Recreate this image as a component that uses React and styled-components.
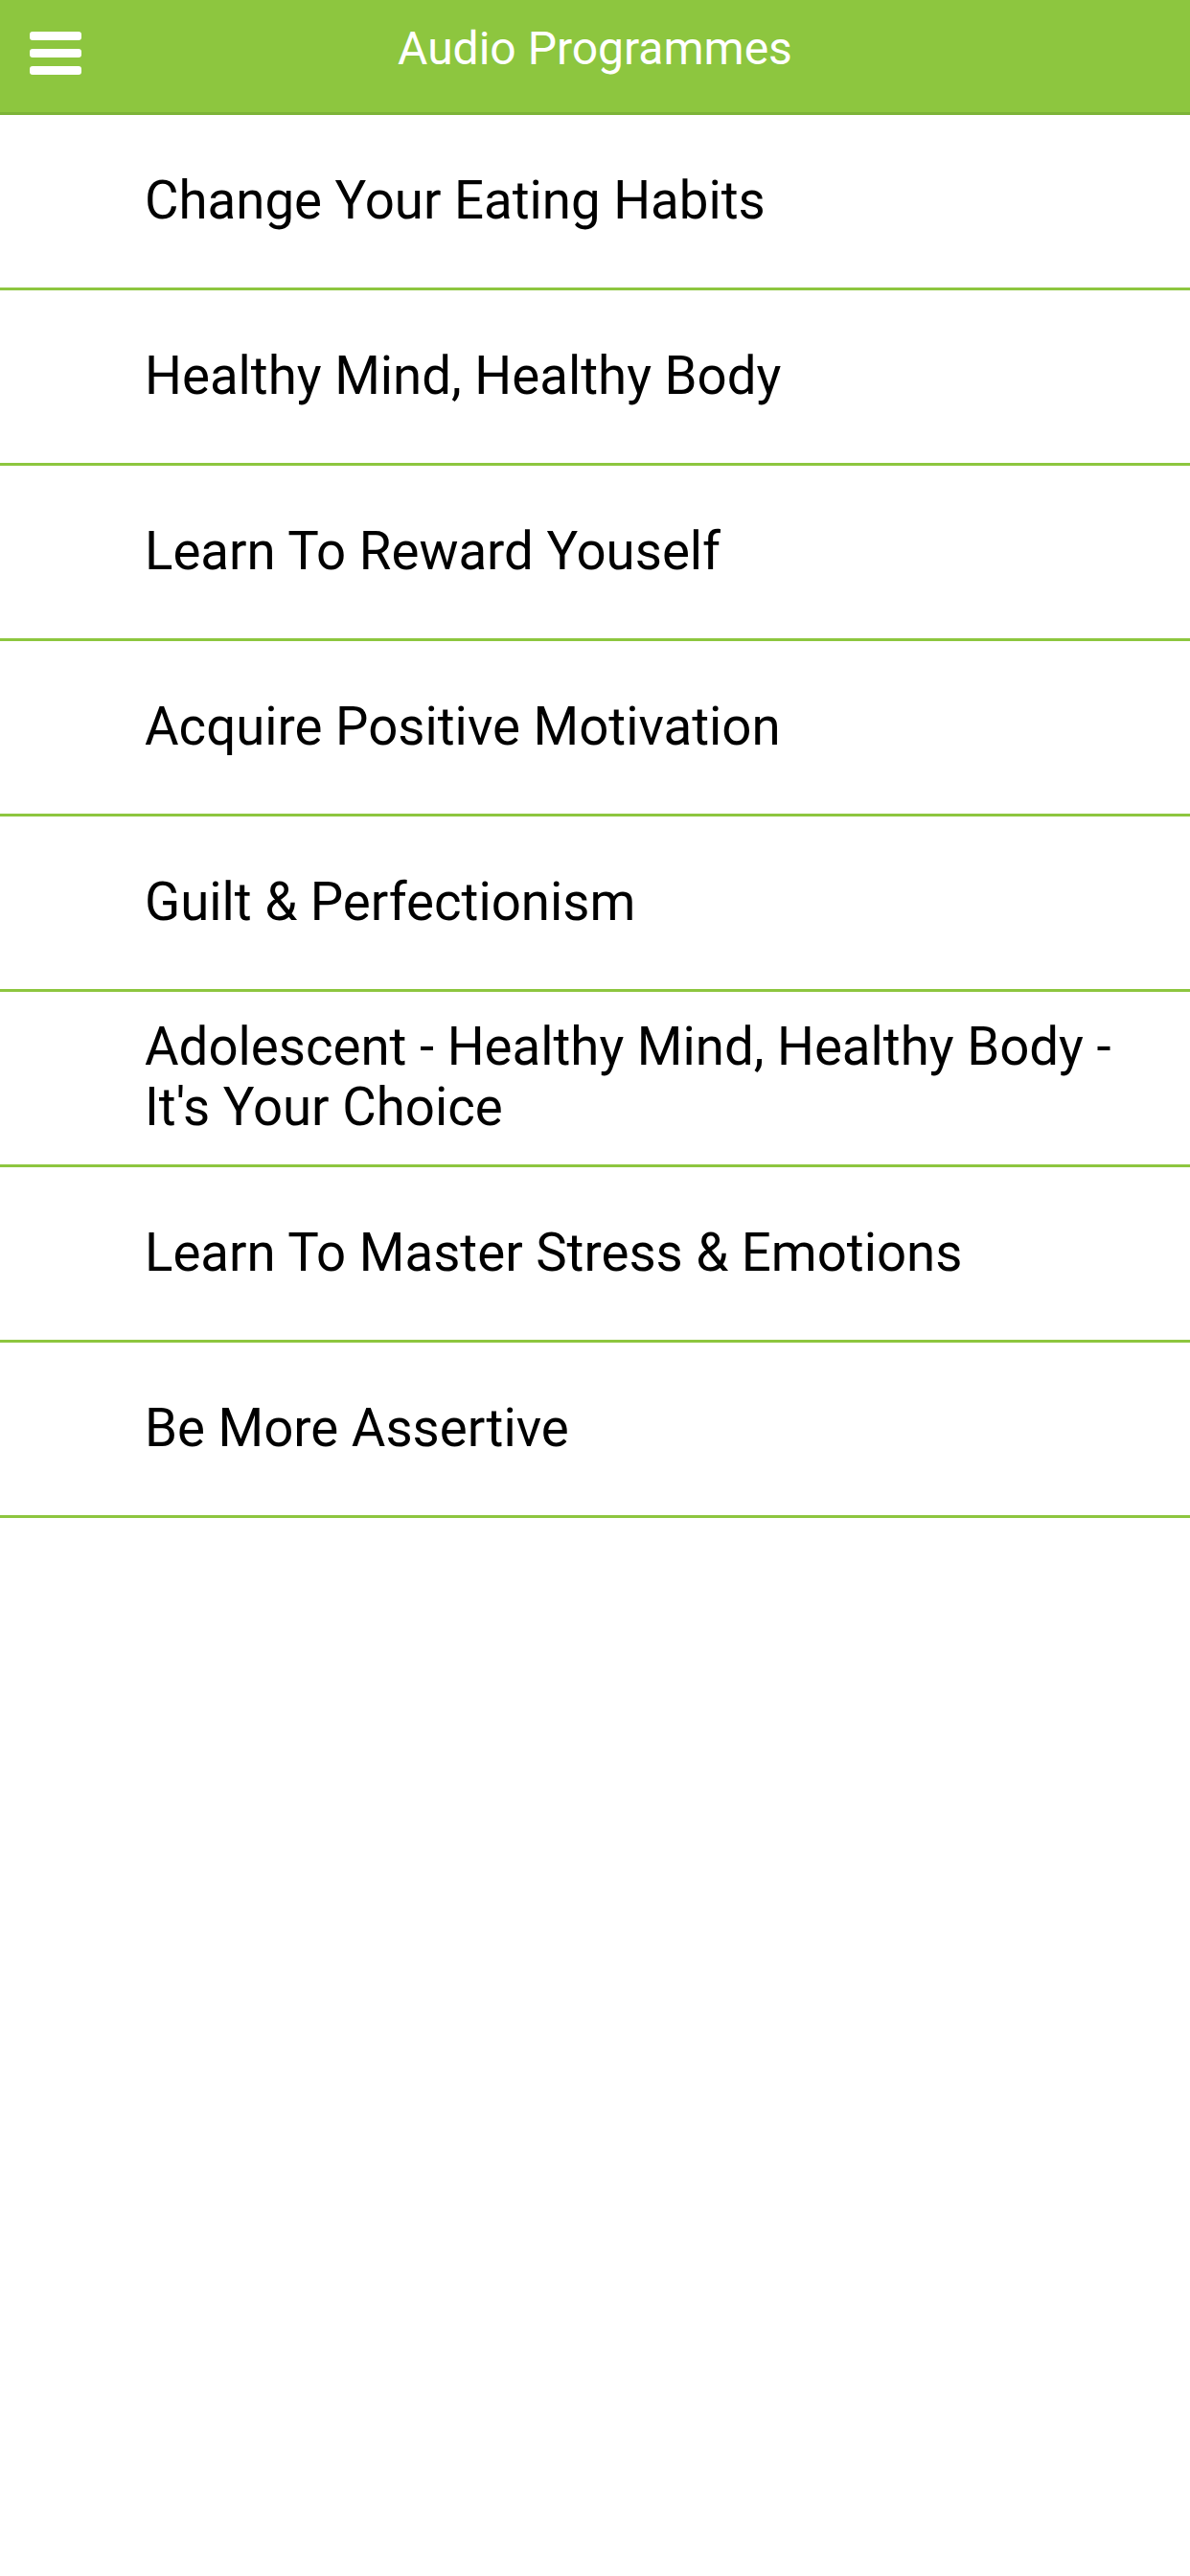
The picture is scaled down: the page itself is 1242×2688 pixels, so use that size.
import React from "react";
import styled, { createGlobalStyle } from "styled-components";

const programmes = [
  "Change Your Eating Habits",
  "Healthy Mind, Healthy Body",
  "Learn To Reward Youself",
  "Acquire Positive Motivation",
  "Guilt & Perfectionism",
  "Adolescent - Healthy Mind, Healthy Body - It's Your Choice",
  "Learn To Master Stress & Emotions",
  "Be More Assertive",
];

function App() {
  return (
    <>
      <GlobalStyle />
      <Page>
        <Header>
          <MenuButton aria-label="menu">
            <Bar />
            <Bar />
            <Bar />
          </MenuButton>
          <Title>Audio Programmes</Title>
        </Header>
        <List>
          {programmes.map((name) => (
            <Row key={name}>
              <RowText>{name}</RowText>
            </Row>
          ))}
        </List>
      </Page>
    </>
  );
}

export default App;

const GlobalStyle = createGlobalStyle`
  html, body {
    margin: 0;
    padding: 0;
    background: #ffffff;
  }
  body {
    font-family: Roboto, "Noto Sans", "Liberation Sans", sans-serif;
  }
`;

const Page = styled.div`
  width: 1242px;
  min-height: 2688px;
  background: #ffffff;
`;

const Header = styled.header`
  position: relative;
  display: flex;
  align-items: center;
  justify-content: center;
  height: 117px;
  background: #8dc63f;
  border-bottom: 3px solid #7db338;
`;

const MenuButton = styled.div`
  position: absolute;
  left: 31px;
  top: 33px;
  display: flex;
  flex-direction: column;
  gap: 9px;
`;

const Bar = styled.span`
  display: block;
  width: 54px;
  height: 9px;
  border-radius: 3px;
  background: #ffffff;
`;

const Title = styled.h1`
  margin: 0;
  padding-bottom: 16px;
  color: #ffffff;
  font-size: 48px;
  font-weight: 400;
  letter-spacing: 0;
`;

const List = styled.ul`
  margin: 0;
  padding: 0;
  list-style: none;
`;

const Row = styled.li`
  display: flex;
  align-items: center;
  min-height: 180px;
  padding: 0 60px 0 151px;
  border-bottom: 3px solid #8dc63f;
`;

const RowText = styled.span`
  color: #000000;
  font-size: 54.6px;
  line-height: 63px;
  margin-top: -2px;
`;
